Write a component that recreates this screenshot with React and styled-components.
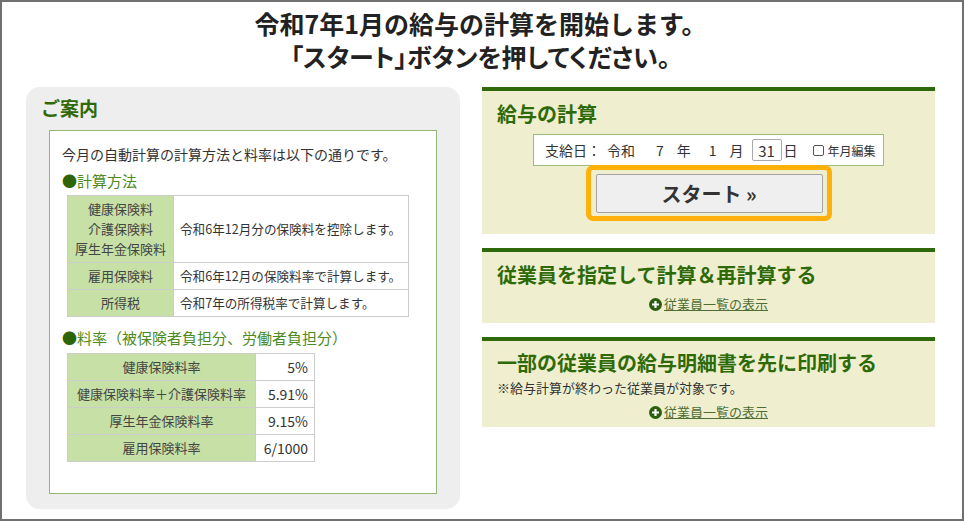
import React from 'react';
import styled, { createGlobalStyle } from 'styled-components';

const GlobalStyle = createGlobalStyle`
  body {
    margin: 0;
    background: #fff;
    font-family: "Noto Sans CJK JP", "Noto Sans", sans-serif;
    color: #333;
  }
`;

const Frame = styled.div`
  width: 964px;
  height: 521px;
  box-sizing: border-box;
  border: 2px solid #707070;
  background: #fff;
  padding: 5px 27px 0 24px;
  overflow: hidden;
`;

const Heading = styled.h1`
  margin: 0 0 14px;
  text-align: center;
  font-size: 25px;
  line-height: 33px;
  font-weight: 700;
  color: #222;
`;

const HeadLine = styled.span`
  display: block;
  font-feature-settings: ${(p) => (p.$palt ? '"palt"' : 'normal')};
`;

const Columns = styled.div`
  display: flex;
  gap: 22px;
  align-items: flex-start;
`;

/* left: guide */
const GuideBox = styled.section`
  width: 434px;
  height: 422px;
  box-sizing: border-box;
  background: #eeeeee;
  border-radius: 14px;
  padding: 9px 23px 0 15px;
  display: flex;
  flex-direction: column;
`;

const GuideTitle = styled.h2`
  margin: 0 0 10px 0;
  font-size: 19px;
  line-height: 24px;
  font-weight: 700;
  color: #2f6a08;
`;

const GuideInner = styled.div`
  height: 364px;
  margin-left: 8px;
  box-sizing: border-box;
  background: #fff;
  border: 1px solid #94b47a;
  padding: 13px 12px 0 12px;
`;

const Intro = styled.p`
  margin: 0;
  font-size: 14px;
  line-height: 20px;
  color: #333;
`;

const SectionHead = styled.h3`
  margin: ${(p) => p.$top}px 0 ${(p) => p.$bottom}px;
  font-size: 15px;
  line-height: 20px;
  font-weight: 400;
  color: #4c8a22;
  &::before {
    content: '●';
    color: #2c6406;
  }
`;

const Table = styled.table`
  margin-left: 5px;
  border-collapse: collapse;
  width: ${(p) => p.$w}px;
  font-size: 13px;
  line-height: 20px;
  td {
    border: 1px solid #cccccc;
    padding: 3px 6px;
    color: #333;
  }
`;

const LabelCell = styled.td`
  background: #c6e0a6;
  text-align: center;
  width: ${(p) => p.$w}px;
  color: #444 !important;
  white-space: nowrap;
`;

const ValueCell = styled.td`
  background: #fff;
  text-align: ${(p) => (p.$right ? 'right' : 'left')};
  font-size: ${(p) => (p.$right ? '14px' : '12.6px')};
  white-space: nowrap;
`;

/* right: panels */
const RightCol = styled.div`
  width: 453px;
  display: flex;
  flex-direction: column;
  gap: 14px;
`;

const Panel = styled.section`
  background: #efefd0;
  border-top: 4px solid #2e690b;
  padding: ${(p) => p.$pad};
  display: flex;
  flex-direction: column;
`;

const PanelTitle = styled.h2`
  margin: 0;
  font-size: 20px;
  line-height: 26px;
  font-weight: 700;
  color: #2f6a08;
`;

const DateBox = styled.div`
  align-self: center;
  width: 351px;
  height: 32px;
  box-sizing: border-box;
  margin-top: 7px;
  background: #fff;
  border: 1px solid #9cbb7e;
  display: flex;
  align-items: center;
  padding-left: 11px;
  font-size: 14px;
  color: #333;
  white-space: nowrap;
`;

const Gap = styled.span`
  display: inline-block;
  width: ${(p) => p.$w}px;
`;

const DayInput = styled.span`
  display: inline-flex;
  align-items: center;
  justify-content: center;
  width: 30px;
  height: 22px;
  box-sizing: border-box;
  border: 1px solid #a9a9a9;
  border-radius: 2px;
  margin: 0 2px 0 8px;
  font-size: 15px;
`;

const CheckLabel = styled.label`
  display: inline-flex;
  align-items: center;
  margin-left: 15px;
  font-size: 12px;
  gap: 4px;
`;

const CheckBox = styled.span`
  display: inline-block;
  width: 9px;
  height: 9px;
  border: 1px solid #555;
  border-radius: 2px;
  background: #fff;
`;

const StartRing = styled.div`
  align-self: center;
  margin-top: -1px;
  width: 246px;
  height: 56px;
  box-sizing: border-box;
  border: 5px solid #ffb00a;
  border-radius: 7px;
  padding: 4px 4px 3px 5px;
`;

const StartButton = styled.button`
  width: 100%;
  height: 100%;
  box-sizing: border-box;
  background: #efefef;
  border: 1px solid #a3a3a3;
  border-radius: 2px;
  font-family: inherit;
  font-size: 20px;
  font-weight: 700;
  color: #333;
  cursor: pointer;
`;

const Note = styled.p`
  margin: 3px 0 0;
  font-size: 13px;
  line-height: 17px;
  color: #333;
`;

const LinkRow = styled.div`
  margin-top: ${(p) => p.$top}px;
  display: flex;
  justify-content: center;
  align-items: center;
  gap: 2px;
  line-height: 18px;
`;

const ListLink = styled.a`
  font-size: 13px;
  color: #4f6d33;
  text-decoration: underline;
`;

const PlusIcon = () => (
  <svg width="13" height="13" viewBox="0 0 13 13">
    <circle cx="6.5" cy="6.5" r="6.5" fill="#2c5e12" />
    <path d="M6.5 3v7M3 6.5h7" stroke="#fff" strokeWidth="2.2" />
  </svg>
);

const EmployeeLink = ({ top }) => (
  <LinkRow $top={top}>
    <PlusIcon />
    <ListLink href="#">従業員一覧の表示</ListLink>
  </LinkRow>
);

const rates = [
  ['健康保険料率', '5%'],
  ['健康保険料率＋介護保険料率', '5.91%'],
  ['厚生年金保険料率', '9.15%'],
  ['雇用保険料率', '6/1000'],
];

export default function App() {
  return (
    <>
      <GlobalStyle />
      <Frame>
        <Heading>
          <HeadLine>令和7年1月の給与の計算を開始します。</HeadLine>
          <HeadLine $palt>「スタート」ボタンを押してください。</HeadLine>
        </Heading>
        <Columns>
          <GuideBox>
            <GuideTitle>ご案内</GuideTitle>
            <GuideInner>
              <Intro>今月の自動計算の計算方法と料率は以下の通りです。</Intro>
              <SectionHead $top={7} $bottom={4}>計算方法</SectionHead>
              <Table $w={342}>
                <tbody>
                  <tr>
                    <LabelCell $w={93}>
                      健康保険料
                      <br />
                      介護保険料
                      <br />
                      厚生年金保険料
                    </LabelCell>
                    <ValueCell>令和6年12月分の保険料を控除します。</ValueCell>
                  </tr>
                  <tr>
                    <LabelCell $w={93}>雇用保険料</LabelCell>
                    <ValueCell>令和6年12月の保険料率で計算します。</ValueCell>
                  </tr>
                  <tr>
                    <LabelCell $w={93}>所得税</LabelCell>
                    <ValueCell>令和7年の所得税率で計算します。</ValueCell>
                  </tr>
                </tbody>
              </Table>
              <SectionHead $top={11} $bottom={5}>料率（被保険者負担分、労働者負担分）</SectionHead>
              <Table $w={248}>
                <tbody>
                  {rates.map(([label, value]) => (
                    <tr key={label}>
                      <LabelCell $w={175}>{label}</LabelCell>
                      <ValueCell $right>{value}</ValueCell>
                    </tr>
                  ))}
                </tbody>
              </Table>
            </GuideInner>
          </GuideBox>

          <RightCol>
            <Panel $pad="10px 15px 13px">
              <PanelTitle>給与の計算</PanelTitle>
              <DateBox>
                支給日：
                <Gap $w={6} />
                令和
                <Gap $w={21} />7<Gap $w={13} />年<Gap $w={18} />1<Gap $w={13} />月
                <DayInput>31</DayInput>日
                <CheckLabel>
                  <CheckBox />
                  年月編集
                </CheckLabel>
              </DateBox>
              <StartRing>
                <StartButton>スタート »</StartButton>
              </StartRing>
            </Panel>

            <Panel $pad="10px 15px 10px">
              <PanelTitle>従業員を指定して計算＆再計算する</PanelTitle>
              <EmployeeLink top={7} />
            </Panel>

            <Panel $pad="9px 15px 6px">
              <PanelTitle>一部の従業員の給与明細書を先に印刷する</PanelTitle>
              <Note>※給与計算が終わった従業員が対象です。</Note>
              <EmployeeLink top={7} />
            </Panel>
          </RightCol>
        </Columns>
      </Frame>
    </>
  );
}
